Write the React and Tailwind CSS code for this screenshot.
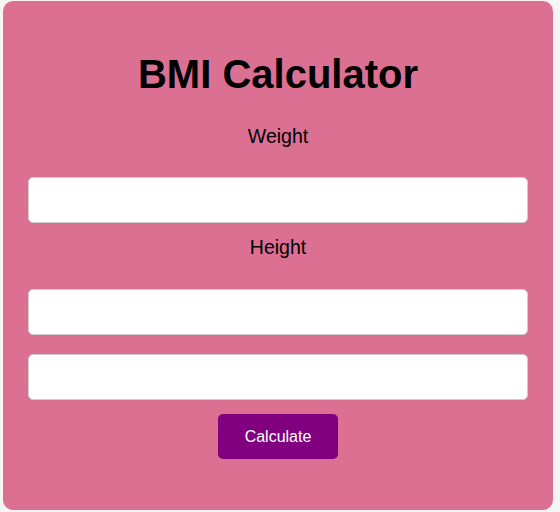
export default function App() {
  const font = { fontFamily: '"Liberation Sans", Arial, sans-serif' };
  return (
    <div className="w-[560px] h-[512px] bg-[#f5f5f5] overflow-hidden" style={font}>
      <div className="ml-[3px] mt-[1px] w-[550px] h-[509px] bg-[#db7093] rounded-[10px] px-[25px] pt-[50px] flex flex-col items-center">
        <h1 className="text-[40px] leading-[46px] font-bold text-black">BMI Calculator</h1>
        <label className="mt-[28px] text-[19.5px] leading-[22px] text-black">Weight</label>
        <input type="text" className="mt-[30px] w-[500px] h-[46px] bg-white border border-[#ccc] rounded-[5px] outline-none" />
        <label className="mt-[13px] text-[19.5px] leading-[22px] text-black">Height</label>
        <input type="text" className="mt-[31px] w-[500px] h-[46px] bg-white border border-[#ccc] rounded-[5px] outline-none" />
        <input type="text" className="mt-[19px] w-[500px] h-[46px] bg-white border border-[#ccc] rounded-[5px] outline-none" />
        <button className="mt-[14px] w-[120px] h-[45px] bg-[#800080] text-white text-[16px] rounded-[5px]">Calculate</button>
      </div>
    </div>
  );
}
